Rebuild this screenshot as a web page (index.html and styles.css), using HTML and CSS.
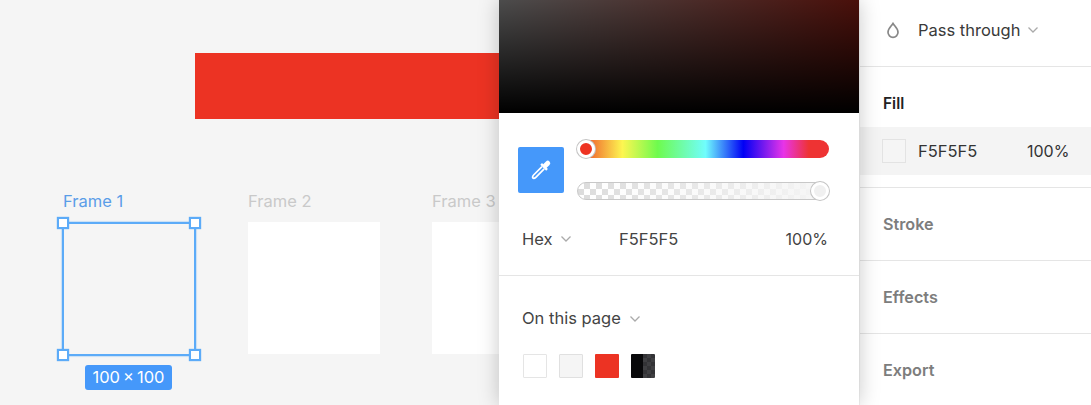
FILE: index.html
```html
<!DOCTYPE html>
<html lang="en">
<head>
  <meta charset="UTF-8" />
  <title>Color picker</title>
  <link rel="stylesheet" href="styles.css">
</head>

<body>
  <div class="app">
    <main class="canvas">
      <div class="red-bar"></div>
      <div class="frames">
        <div class="frame frame-selected">
          <div class="frame-label">Frame 1</div>
          <div class="frame-box">
            <span class="handle handle-tl"></span>
            <span class="handle handle-tr"></span>
            <span class="handle handle-bl"></span>
            <span class="handle handle-br"></span>
            <span class="size-badge">100&#8201;×&#8201;100</span>
          </div>
        </div>
        <div class="frame">
          <div class="frame-label">Frame 2</div>
          <div class="frame-box"></div>
        </div>
        <div class="frame">
          <div class="frame-label">Frame 3</div>
          <div class="frame-box"></div>
        </div>
      </div>
    </main>

    <aside class="panel">
      <div class="section blend-row">
        <svg class="drop-icon" width="14" height="17" viewBox="0 0 14 17">
          <path d="M7 1.5 C5.5 4 2 6.5 2 10.3 A5 5 0 0 0 12 10.3 C12 6.5 8.5 4 7 1.5 Z" />
        </svg>
        <span>Pass through</span>
        <svg class="chevron" width="12" height="8" viewBox="0 0 12 8"><path d="M1.5 1.5 6 6l4.5-4.5" /></svg>
      </div>
      <div class="section fill-section">
        <h3 class="fill-title">Fill</h3>
        <div class="fill-row">
          <span class="fill-swatch"></span>
          <span class="fill-hex">F5F5F5</span>
          <span class="fill-alpha">100%</span>
        </div>
      </div>
      <div class="section muted-section">Stroke</div>
      <div class="section muted-section">Effects</div>
      <div class="section muted-section">Export</div>
    </aside>

    <div class="picker">
      <div class="picker-area"></div>
      <div class="picker-controls">
        <button class="eyedropper">
          <svg width="24" height="24" viewBox="0 0 24 24">
            <path class="dropper-bulb" d="M14.2 6.2 17 3.4a2.4 2.4 0 0 1 3.5 3.5l-2.8 2.9 1.2 1.2-1.7 1.7-5.9-5.9 1.7-1.7z" />
            <path class="dropper-tube" d="M13 8.6 4.6 17c-1 1-1.1 1.8-1 2.5l.6.8c.8.2 1.6 0 2.6-1l8.4-8.4" />
          </svg>
        </button>
        <div class="sliders">
          <div class="slider hue"><span class="thumb thumb-hue"></span></div>
          <div class="slider alpha"><span class="thumb thumb-alpha"></span></div>
        </div>
      </div>
      <div class="hex-row">
        <span class="hex-mode">Hex
          <svg class="chevron" width="12" height="8" viewBox="0 0 12 8"><path d="M1.5 1.5 6 6l4.5-4.5" /></svg>
        </span>
        <span class="hex-value">F5F5F5</span>
        <span class="hex-alpha">100%</span>
      </div>
      <div class="library">
        <div class="library-title">On this page
          <svg class="chevron" width="12" height="8" viewBox="0 0 12 8"><path d="M1.5 1.5 6 6l4.5-4.5" /></svg>
        </div>
        <div class="swatches">
          <span class="swatch swatch-white"></span>
          <span class="swatch swatch-grey"></span>
          <span class="swatch swatch-red"></span>
          <span class="swatch swatch-dark"></span>
        </div>
      </div>
    </div>
  </div>
</body>

</html>
```

FILE: styles.css
```css
body {
  margin: 0;
  font-family: Inter, "Liberation Sans", sans-serif;
  background-color: #f5f5f5;
}

.app {
  position: relative;
  display: flex;
  height: 405px;
  overflow: hidden;
}

/* canvas */
.canvas {
  width: 860px;
  flex-shrink: 0;
  padding-top: 53px;
  box-sizing: border-box;
}

.red-bar {
  height: 66px;
  margin-left: 195px;
  margin-right: 300px;
  background-color: #ec3323;
}

.frames {
  display: flex;
  gap: 52px;
  margin-top: 73px;
  padding-left: 64px;
}

.frame {
  width: 132px;
}

.frame-label {
  height: 30px;
  font-size: 16.5px;
  line-height: 19px;
  color: #c9c9c9;
}

.frame-box {
  position: relative;
  height: 132px;
  background-color: #fff;
}

.frame-selected .frame-label {
  margin-left: -1px;
  color: #5a9de8;
}

.frame-selected .frame-box {
  margin-left: -2px;
  box-sizing: border-box;
  width: 134px;
  height: 134px;
  background: none;
  border: 2px solid #5cabf8;
  box-shadow: 0 0 1.5px #5cabf8;
}

.handle {
  position: absolute;
  width: 12px;
  height: 12px;
  box-sizing: border-box;
  background-color: #fff;
  border: 2px solid #5cabf8;
  box-shadow: 0 0 1px #5cabf8;
}

.handle-tl { top: -7px; left: -7px; }
.handle-tr { top: -7px; right: -7px; }
.handle-bl { bottom: -7px; left: -7px; }
.handle-br { bottom: -7px; right: -7px; }

.size-badge {
  position: absolute;
  top: 141px;
  left: 21px;
  width: 87px;
  height: 25px;
  border-radius: 3px;
  background-color: #4598fa;
  color: #fff;
  font-size: 16.5px;
  line-height: 25px;
  text-align: center;
  white-space: nowrap;
}

/* right panel */
.panel {
  flex: 1;
  background-color: #fff;
  color: #333;
  font-size: 16.5px;
}

.section {
  border-bottom: 1px solid #e5e5e5;
  box-sizing: border-box;
}

.blend-row {
  display: flex;
  align-items: center;
  height: 67px;
  padding: 0 0 6px 26px;
  color: #3a3a3a;
}

.blend-row span {
  margin: 0 7px 0 18px;
}

.drop-icon path {
  fill: none;
  stroke: #888;
  stroke-width: 1.7;
}

.chevron path {
  fill: none;
  stroke: #aaa;
  stroke-width: 1.3;
}

.fill-section {
  height: 121px;
}

.fill-title {
  margin: 0;
  padding: 27px 0 0 23px;
  height: 60px;
  box-sizing: border-box;
  font-size: 15.5px;
  line-height: 19px;
  font-weight: 600;
  color: #222;
}

.fill-row {
  display: flex;
  align-items: center;
  height: 48px;
  padding-left: 22px;
  background-color: #f4f4f4;
}

.fill-swatch {
  width: 24px;
  height: 24px;
  box-sizing: border-box;
  background-color: #f5f5f5;
  border: 1px solid #e3e3e3;
}

.fill-hex {
  margin-left: 12px;
  width: 109px;
}

.fill-alpha {
  font-size: 16px;
}

.muted-section {
  height: 73px;
  padding: 26px 0 0 23px;
  font-size: 16.2px;
  line-height: 20px;
  font-weight: 600;
  color: #7d7d7d;
}

/* color picker popover */
.picker {
  position: absolute;
  top: 0;
  left: 499px;
  width: 360px;
  height: 405px;
  background-color: #fff;
  box-shadow: 0 0 20px rgba(0, 0, 0, 0.22);
  color: #444;
  font-size: 16.5px;
}

.picker-area {
  height: 113px;
  background:
    linear-gradient(to top, #000, rgba(0, 0, 0, 0.69)),
    linear-gradient(to right, #f5f5f5, #ee3322);
}

.picker-controls {
  display: flex;
  align-items: center;
  gap: 13px;
  height: 60px;
  margin-top: 27px;
  padding-left: 19px;
}

.eyedropper {
  display: flex;
  align-items: center;
  justify-content: center;
  width: 46px;
  height: 46px;
  padding: 0;
  border: none;
  border-radius: 2px;
  background-color: #4598fa;
}

.dropper-bulb {
  fill: #fff;
}

.dropper-tube {
  fill: none;
  stroke: #fff;
  stroke-width: 1.7;
}

.sliders {
  display: flex;
  flex-direction: column;
  gap: 24px;
  width: 252px;
}

.slider {
  position: relative;
  height: 18px;
  border-radius: 9px;
  box-sizing: border-box;
}

.hue {
  background: linear-gradient(to right, #ee3322 0%, #f5a13c 10%, #fdf651 18%, #6efb4e 32%, #70fdfd 51%, #0000f5 66%, #e834e8 82%, #ee3333 92%, #ee3333 100%);
}

.alpha {
  border: 1px solid #c8c8c8;
  background:
    linear-gradient(to right, rgba(245, 245, 245, 0), #f5f5f5),
    repeating-conic-gradient(#dcdcdc 0 25%, #fff 0 50%) 0 0 / 12px 12px;
}

.thumb {
  position: absolute;
  width: 18px;
  height: 18px;
  box-sizing: border-box;
  border-radius: 50%;
  border: 3px solid #fff;
  box-shadow: 0 0 0 1px #c4c4c4;
}

.thumb-hue {
  top: 0;
  left: 0;
  background-color: #ee3322;
}

.thumb-alpha {
  top: -1px;
  right: -1px;
  background-color: #f0f0f0;
}

.hex-row {
  display: flex;
  align-items: center;
  height: 34px;
  margin: 22px 0 19px;
  padding: 0 31px 0 23px;
}

.hex-mode {
  display: flex;
  align-items: center;
  gap: 7px;
  width: 97px;
}

.hex-value {
  flex: 1;
}

.hex-alpha {
  font-size: 16px;
}

.library {
  border-top: 1px solid #e5e5e5;
  padding: 33px 0 0 23px;
}

.library-title {
  display: flex;
  align-items: center;
  gap: 8px;
  line-height: 19px;
}

.swatches {
  display: flex;
  gap: 12px;
  margin: 26px 0 0 1px;
}

.swatch {
  width: 24px;
  height: 24px;
  box-sizing: border-box;
  border-radius: 1px;
}

.swatch-white {
  background-color: #fff;
  border: 1px solid #e5e5e5;
}

.swatch-grey {
  background-color: #f5f5f5;
  border: 1px solid #e0e0e0;
}

.swatch-red {
  background-color: #ec3323;
}

.swatch-dark {
  background:
    linear-gradient(to right, #08080a 50%, transparent 50%),
    repeating-conic-gradient(#333336 0 25%, #3f3f42 0 50%) 0 0 / 8px 8px;
}
```
